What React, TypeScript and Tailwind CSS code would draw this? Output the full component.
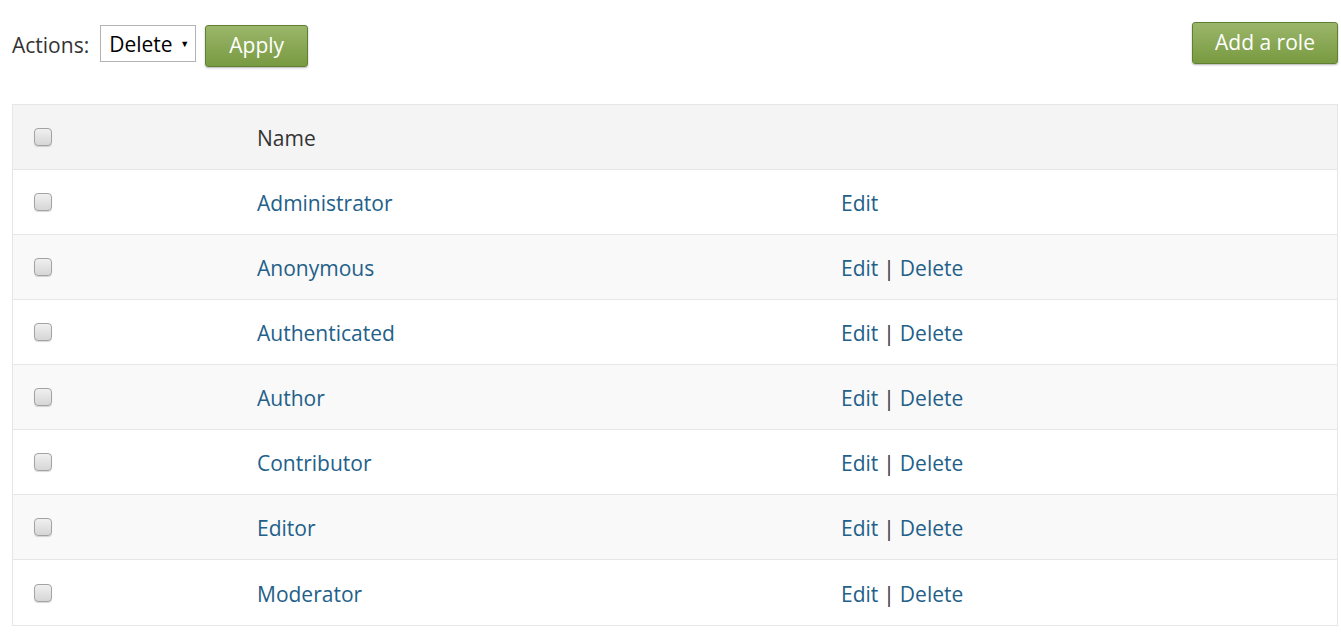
import React from 'react';

const roles = [
    { name: 'Administrator', canDelete: false },
    { name: 'Anonymous', canDelete: true },
    { name: 'Authenticated', canDelete: true },
    { name: 'Author', canDelete: true },
    { name: 'Contributor', canDelete: true },
    { name: 'Editor', canDelete: true },
    { name: 'Moderator', canDelete: true },
];

const Checkbox: React.FC = () => (
    <span className="block w-[18px] h-[18px] rounded-[4px] border border-[#a3a3a3] bg-gradient-to-b from-[#f0f0f0] to-[#d6d6d6] shadow-[0_1px_1px_rgba(0,0,0,0.15)]"></span>
);

const greenBtn = 'h-[42px] rounded-[3px] border border-[#5f7f32] bg-gradient-to-b from-[#9bb66a] to-[#789a40] text-white text-[21px] shadow-[0_1px_2px_rgba(0,0,0,0.3)]';

const App: React.FC = () => {
    return (
        <div className="w-[1341px] h-[633px] bg-white text-[#333] text-[21px] font-['Open_Sans',sans-serif] pl-3 pr-[3px]">
            <div className="flex items-start justify-between pt-[22px]">
                <div className="flex items-start mt-[3px]">
                    <span className="mr-[11px] leading-[37px] pt-[2px]">Actions:</span>
                    <div className="w-[96px] h-[37px] border border-[#b3b3b3] flex items-center justify-between pl-[8px] pr-[6px] text-black">
                        <span className="pt-[2px]">Delete</span>
                        <span className="text-[9px]">▼</span>
                    </div>
                    <button className={`${greenBtn} w-[103px] ml-[9px]`}>Apply</button>
                </div>
                <button className={`${greenBtn} w-[146px]`}>Add a role</button>
            </div>

            <div className="mt-[37px] border border-[#e6e6e6]">
                <div className="flex items-center h-[65px] bg-[#f4f4f4] border-b border-[#e6e6e6]">
                    <div className="w-[244px] pl-[21px]"><Checkbox /></div>
                    <div className="pt-[4px]">Name</div>
                </div>
                {roles.map((role, i) => (
                    <div key={role.name} className={`flex items-center h-[65px] ${i < roles.length - 1 ? 'border-b border-[#e6e6e6]' : ''} ${i % 2 === 0 ? 'bg-white' : 'bg-[#f9f9f9]'}`}>
                        <div className="w-[244px] pl-[21px]"><Checkbox /></div>
                        <div className="w-[584px] pt-[4px] text-[#236089]">{role.name}</div>
                        <div className="pt-[4px]">
                            <span className="text-[#236089]">Edit</span>
                            {role.canDelete && (
                                <>
                                    <span className="mx-[5px]">|</span>
                                    <span className="text-[#236089]">Delete</span>
                                </>
                            )}
                        </div>
                    </div>
                ))}
            </div>
        </div>
    );
};

export default App;
